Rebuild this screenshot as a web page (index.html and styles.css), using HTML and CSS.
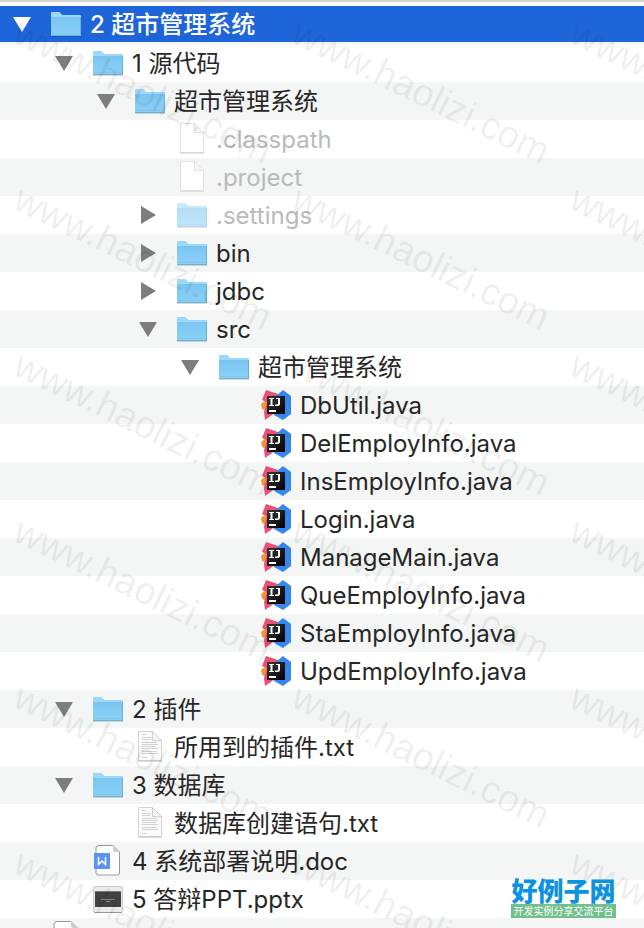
FILE: index.html
```
<!DOCTYPE html>
<html lang="zh-CN">
<head>
    <meta charset="UTF-8">
    <meta name="viewport" content="width=device-width, initial-scale=1.0">
    <title>超市管理系统</title>
    <link rel="stylesheet" href="styles.css">
</head>
<body>
    <!-- Icon definitions -->
    <svg class="defs" aria-hidden="true">
        <defs>
            <linearGradient id="folderFill" x1="0" y1="0" x2="0" y2="1">
                <stop offset="0" stop-color="#7ac6f2"/>
                <stop offset="1" stop-color="#8bd1f8"/>
            </linearGradient>
            <linearGradient id="ijFill" x1="0" y1="0" x2="1" y2="1">
                <stop offset="0" stop-color="#383838"/>
                <stop offset="1" stop-color="#000"/>
            </linearGradient>
        </defs>
        <symbol id="folder" viewBox="0 0 32 32">
            <path d="M1 28.500h30" stroke="#000" stroke-opacity=".15"/>
            <path d="M1 5q0-1 1-1h7q1 0 2 1.500T13 7h17q1 0 1 1v19q0 1-1 1H2q-1 0-1-1z" fill="#9cd8fa"/>
            <path d="M1 10h30v17q0 1-1 1H2q-1 0-1-1z" fill="url(#folderFill)"/>
            <path d="M1 9.500h30" stroke="#7fc3eb"/>
            <path d="M1 27.500h30M30.500 9v18" stroke="#6cb1da" fill="none"/>
            <path d="M2 25.500h28" stroke="#7cc6f0"/>
        </symbol>
        <symbol id="file" viewBox="0 1 32 32">
            <path d="M4.500 1.500h14l9 9v20h-23z" fill="#fff" stroke="#e0e0e0"/>
            <path d="M18.500 1.500v9h9z" fill="#f5f5f5" stroke="#e0e0e0"/>
            <path d="M4 31h24" stroke="#d0d0d0"/>
        </symbol>
        <symbol id="text" viewBox="0 1 32 32">
            <path d="M4.500 1.500h14l9 9v20h-23z" fill="#fafafa" stroke="#d4d4d4"/>
            <path d="M18.500 1.500v9h9z" fill="#f5f5f5" stroke="#d0d0d0"/>
            <path d="M4 31h24" stroke="#c0c0c0"/>
            <path d="M8 4.500h4M8 7.500h9M8 9.500h8M8 12.500h15M8 14.500h16M8 16.500h14M8 18.500h16M8 21.500h15M8 23.500h16M8 27.500h5" stroke="#d2d2d2"/>
        </symbol>
        <symbol id="word" viewBox="0 1 32 32">
            <path d="M6 1.500h15l6.500 6.500v21q0 2-2 2H6q-2 0-2-2v-25q0-2 2-2z" fill="#fff" stroke="#999"/>
            <path d="M21 2v4q0 2 2 2h4z" fill="#ccc"/>
            <path d="M2 9h16v16H2z" fill="#5b94ee"/>
            <path d="M6.500 13v7.500l3.500-3.500 3.500 3.500V13" fill="none" stroke="#fff" stroke-width="1.500"/>
        </symbol>
        <symbol id="slides" viewBox="0 0 32 32">
            <rect x="1.500" y="3.500" width="29" height="26" rx="2" fill="#ebebeb" stroke="#c9c9c9"/>
            <path d="M2 29.500h28" stroke="#999"/>
            <path d="M3 8h26v16H3z" fill="#414141"/>
            <path d="M3 8.500h26" stroke="#777"/>
            <path d="M9 16.500h14M14 18.500h4" stroke="#8a8a8a"/>
        </symbol>
        <symbol id="java" viewBox="0 0 32 32">
            <path d="M1 15l6-5v12l-5-2z" fill="#f59535"/>
            <path d="M2 11L6 1l12 4 4 14-17 12-1-8 3-10z" fill="#ea4f75"/>
            <path d="M16 7l7-6 8 6v18l-8 6-9-5z" fill="#3488ed"/>
            <path d="M7 7h18v18H7z" fill="url(#ijFill)"/>
            <path d="M9 9h5v1h-1.500v6H14v1H9v-1h1.500v-6H9zM16 9h4v6q0 2-2.500 2H15v-1.500h2q1 0 1-1V10h-2z" fill="#fff"/>
            <path d="M9 21h7v2H9z" fill="#fff"/>
        </symbol>
        <symbol id="open" viewBox="0 0 20 20"><path d="M1 3h18l-9 15z" fill="currentColor"/></symbol>
        <symbol id="closed" viewBox="0 0 20 20"><path d="M3 1l15 9-15 9z" fill="currentColor"/></symbol>
    </svg>

    <ul class="tree">
        <li class="row selected"><button aria-label="折叠"><svg><use href="#open"/></svg></button><svg class="icon"><use href="#folder"/></svg><span>2 超市管理系统</span></li>
        <li class="row level-1"><button aria-label="折叠"><svg><use href="#open"/></svg></button><svg class="icon"><use href="#folder"/></svg><span>1 源代码</span></li>
        <li class="row level-2"><button aria-label="折叠"><svg><use href="#open"/></svg></button><svg class="icon"><use href="#folder"/></svg><span>超市管理系统</span></li>
        <li class="row level-3 hidden-file"><svg class="icon"><use href="#file"/></svg><span>.classpath</span></li>
        <li class="row level-3 hidden-file"><svg class="icon"><use href="#file"/></svg><span>.project</span></li>
        <li class="row level-3 hidden-file"><button aria-label="展开"><svg><use href="#closed"/></svg></button><svg class="icon faded"><use href="#folder"/></svg><span>.settings</span></li>
        <li class="row level-3"><button aria-label="展开"><svg><use href="#closed"/></svg></button><svg class="icon"><use href="#folder"/></svg><span>bin</span></li>
        <li class="row level-3"><button aria-label="展开"><svg><use href="#closed"/></svg></button><svg class="icon"><use href="#folder"/></svg><span>jdbc</span></li>
        <li class="row level-3"><button aria-label="折叠"><svg><use href="#open"/></svg></button><svg class="icon"><use href="#folder"/></svg><span>src</span></li>
        <li class="row level-4"><button aria-label="折叠"><svg><use href="#open"/></svg></button><svg class="icon"><use href="#folder"/></svg><span>超市管理系统</span></li>
        <li class="row level-5"><svg class="icon"><use href="#java"/></svg><span>DbUtil.java</span></li>
        <li class="row level-5"><svg class="icon"><use href="#java"/></svg><span>DelEmployInfo.java</span></li>
        <li class="row level-5"><svg class="icon"><use href="#java"/></svg><span>InsEmployInfo.java</span></li>
        <li class="row level-5"><svg class="icon"><use href="#java"/></svg><span>Login.java</span></li>
        <li class="row level-5"><svg class="icon"><use href="#java"/></svg><span>ManageMain.java</span></li>
        <li class="row level-5"><svg class="icon"><use href="#java"/></svg><span>QueEmployInfo.java</span></li>
        <li class="row level-5"><svg class="icon"><use href="#java"/></svg><span>StaEmployInfo.java</span></li>
        <li class="row level-5"><svg class="icon"><use href="#java"/></svg><span>UpdEmployInfo.java</span></li>
        <li class="row level-1"><button aria-label="折叠"><svg><use href="#open"/></svg></button><svg class="icon"><use href="#folder"/></svg><span>2 插件</span></li>
        <li class="row level-2"><svg class="icon"><use href="#text"/></svg><span>所用到的插件.txt</span></li>
        <li class="row level-1"><button aria-label="折叠"><svg><use href="#open"/></svg></button><svg class="icon"><use href="#folder"/></svg><span>3 数据库</span></li>
        <li class="row level-2"><svg class="icon"><use href="#text"/></svg><span>数据库创建语句.txt</span></li>
        <li class="row level-1"><svg class="icon"><use href="#word"/></svg><span>4 系统部署说明.doc</span></li>
        <li class="row level-1"><svg class="icon"><use href="#slides"/></svg><span>5 答辩PPT.pptx</span></li>
        <li class="row"><svg class="icon"><use href="#word"/></svg></li>
    </ul>

    <!-- Repeated site watermark -->
    <div class="watermark" aria-hidden="true">
        <span>www.haolizi.com</span><span>www.haolizi.com</span><span>www.haolizi.com</span>
        <span>www.haolizi.com</span><span>www.haolizi.com</span><span>www.haolizi.com</span>
        <span>www.haolizi.com</span><span>www.haolizi.com</span><span>www.haolizi.com</span>
        <span>www.haolizi.com</span><span>www.haolizi.com</span><span>www.haolizi.com</span>
        <span>www.haolizi.com</span><span>www.haolizi.com</span><span>www.haolizi.com</span>
        <span>www.haolizi.com</span><span>www.haolizi.com</span><span>www.haolizi.com</span>
    </div>

    <div class="badge">
        <strong>好例子网</strong>
        <small>开发实例分享交流平台</small>
    </div>
</body>
</html>
```
FILE: styles.css
```
* { box-sizing: border-box; }
body {
    margin: 0;
    height: 100vh;
    overflow: hidden;
    position: relative;
    background-color: #fff;
    color: #262626;
    font-family: Inter, "Noto Sans CJK SC", sans-serif;
    font-size: 24px;
}
.defs { position: absolute; width: 0; height: 0; }

.tree {
    list-style: none;
    margin: 0;
    padding: 4px 0 0;
    height: 100%;
    overflow: hidden;
    border-top: 2px solid #d3d3d3;
}
.row {
    display: grid;
    grid-template-columns: 20px 32px 1fr;
    column-gap: 18px;
    align-items: center;
    height: 38px;
    padding-left: 12px;
    line-height: 34px;
    white-space: nowrap;
}
.row:nth-child(odd) { background-color: #f4f5f5; }
.row.selected {
    background-color: #1f65da;
    border-bottom: 2px solid #f4f5f5;
    color: #fff;
    font-weight: 500;
}
.level-1 { padding-left: 54px; }
.level-2 { padding-left: 96px; }
.level-3 { padding-left: 138px; }
.level-4 { padding-left: 180px; }
.level-5 { padding-left: 222px; }

.row button {
    width: 20px;
    height: 20px;
    padding: 0;
    border: none;
    background: none;
    color: #7d7d7d;
    cursor: pointer;
}
.row button svg { display: block; width: 20px; height: 20px; }
.row.selected button { color: #fff; }
.icon { grid-column: 2; width: 32px; height: 32px; }
.faded { opacity: .55; }
.row span { grid-column: 3; margin-left: -10px; padding-top: 2px; }
.hidden-file span { color: #b9baba; }

.watermark {
    position: absolute;
    inset: 0;
    overflow: hidden;
    padding: 10px 0 0 17px;
    display: grid;
    grid-template-columns: repeat(3, 278px);
    grid-auto-rows: 166px;
    align-content: start;
    pointer-events: none;
    color: rgba(0, 0, 0, .07);
    font-family: "Liberation Sans", Arial, sans-serif;
    font-size: 38px;
    line-height: 40px;
}
.watermark span {
    height: 40px;
    transform: rotate(26deg);
    transform-origin: 0 50%;
}

.badge {
    position: absolute;
    right: 28px;
    bottom: 10px;
    display: flex;
    flex-direction: column;
    width: 105px;
    font-family: "Noto Sans CJK SC", sans-serif;
    text-align: center;
    white-space: nowrap;
}
.badge strong {
    color: #0b92e2;
    font-size: 26px;
    font-weight: 900;
    line-height: 28px;
}
.badge small {
    background-color: #72c08d;
    color: #fff;
    font-size: 10px;
    line-height: 14px;
}
```
